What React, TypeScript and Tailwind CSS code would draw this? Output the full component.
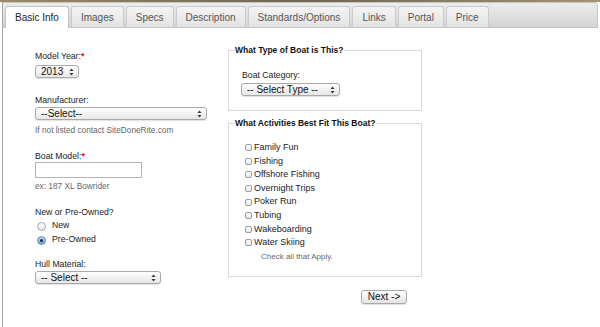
import React from 'react';

const tabs = ['Basic Info', 'Images', 'Specs', 'Description', 'Standards/Options', 'Links', 'Portal', 'Price'];

const activities = [
  'Family Fun',
  'Fishing',
  'Offshore Fishing',
  'Overnight Trips',
  'Poker Run',
  'Tubing',
  'Wakeboarding',
  'Water Skiing',
];

const Arrows: React.FC = () => (
  <svg width="5" height="8" viewBox="0 0 5 8" className="shrink-0">
    <path d="M2.5 0.5L4.5 3H0.5Z" fill="#333" />
    <path d="M2.5 7.5L4.5 5H0.5Z" fill="#333" />
  </svg>
);

const FakeSelect: React.FC<{ label: string; width: string }> = ({ label, width }) => (
  <div
    className={`${width} h-[13px] flex items-center justify-between pl-[5px] pr-[4px] rounded-[3px] border border-[#a9a9a9] bg-gradient-to-b from-white to-[#e6e6e6] shadow-[0_1px_1px_rgba(0,0,0,0.12)] text-[10px] leading-none text-[#111]`}
  >
    <span>{label}</span>
    <Arrows />
  </div>
);

const Label: React.FC<{ text: string; required?: boolean }> = ({ text, required }) => (
  <div className="text-[8.7px] leading-[11px] text-[#222]">
    {text}
    {required && <span className="text-[#e00] font-bold">*</span>}
  </div>
);

const App: React.FC = () => {
  return (
    <div className="w-[600px] h-[327px] overflow-hidden bg-white flex flex-col font-['Liberation_Sans',Arial,sans-serif]">
      {/* top photo strip */}
      <div className="h-[2px] shrink-0 bg-gradient-to-r from-[#9a8a66] via-[#6f6550] to-[#a39472]" />

      <div className="flex-1 flex flex-col ml-[2px] mr-[2px] border-l border-[#a8a8a8]">
        {/* tab bar */}
        <div className="h-[26px] shrink-0 flex items-end gap-[2px] pl-[2px] rounded-tr-[4px] border-t border-r border-b border-[#c6c6c6] bg-gradient-to-b from-[#ededed] to-[#d3d3d3]">
          {tabs.map((t, i) => (
            <div
              key={t}
              className={
                i === 0
                  ? 'h-[22px] -mb-[1px] px-[9px] flex items-center rounded-t-[3px] border border-b-0 border-[#c2c2c2] bg-white text-[10px] text-[#222]'
                  : 'h-[21px] px-[9px] flex items-center rounded-t-[3px] border border-b-0 border-[#cacaca] bg-gradient-to-b from-[#f4f4f4] to-[#e3e3e3] text-[10px] text-[#555]'
              }
            >
              {t}
            </div>
          ))}
        </div>

        {/* form body */}
        <div className="flex flex-1">
          {/* left column */}
          <div className="w-[192px] ml-[32px] pt-[23px] flex flex-col items-start">
            <Label text="Model Year:" required />
            <div className="mt-[3px]">
              <FakeSelect label="2013" width="w-[44px]" />
            </div>

            <div className="mt-[17px]">
              <Label text="Manufacturer:" />
            </div>
            <div className="mt-[1px]">
              <FakeSelect label="--Select--" width="w-[172px]" />
            </div>
            <div className="mt-[5px] text-[8.3px] leading-[10px] text-[#666]">If not listed contact SiteDoneRite.com</div>

            <div className="mt-[16px]">
              <Label text="Boat Model:" required />
            </div>
            <input
              type="text"
              className="w-[107px] h-[16px] border border-[#b5b5b5] bg-white outline-none"
              readOnly
            />
            <div className="mt-[3px] text-[8.3px] leading-[10px] text-[#666]">ex: 187 XL Bowrider</div>

            <div className="mt-[16px]">
              <Label text="New or Pre-Owned?" />
            </div>
            <div className="mt-[1px] flex flex-col">
              <div className="h-[14px] flex items-center pl-[2px] gap-[6px] text-[8.7px] text-[#222]">
                <span className="w-[9px] h-[9px] rounded-full border border-[#a5a5a5] bg-gradient-to-b from-white to-[#e4e4e4]" />
                New
              </div>
              <div className="h-[14px] flex items-center pl-[2px] gap-[6px] text-[8.7px] text-[#222]">
                <span className="w-[9px] h-[9px] rounded-full border border-[#5a87c0] bg-gradient-to-b from-[#bcd6f4] to-[#6fa1dc] flex items-center justify-center">
                  <span className="w-[3px] h-[3px] rounded-full bg-[#1b2a3a]" />
                </span>
                Pre-Owned
              </div>
            </div>

            <div className="mt-[12px]">
              <Label text="Hull Material:" />
            </div>
            <div className="mt-[1px]">
              <FakeSelect label="-- Select --" width="w-[126px]" />
            </div>
          </div>

          {/* right column */}
          <div className="w-[194px] ml-[1px] flex flex-col">
            <fieldset className="mt-[17px] border border-[#d9d9d9] pl-[12px] pb-[14px]">
              <legend className="ml-[-7px] px-[1px] text-[8.5px] leading-[10px] font-bold text-[#111]">
                What Type of Boat is This?
              </legend>
              <div className="mt-[15px] pl-[1px]">
                <Label text="Boat Category:" />
              </div>
              <div className="mt-[2px]">
                <FakeSelect label="-- Select Type --" width="w-[99px]" />
              </div>
            </fieldset>

            <fieldset className="mt-[7px] border border-[#d9d9d9] pl-[16px] pb-[13px]">
              <legend className="ml-[-11px] px-[1px] text-[8.5px] leading-[10px] font-bold text-[#111]">
                What Activities Best Fit This Boat?
              </legend>
              <div className="mt-[13px] flex flex-col">
                {activities.map((a) => (
                  <div key={a} className="h-[13.6px] flex items-center gap-[2px] text-[9px] text-[#222]">
                    <span className="w-[7px] h-[7px] rounded-[2px] border border-[#9c9c9c] bg-gradient-to-b from-white to-[#e8e8e8]" />
                    {a}
                  </div>
                ))}
                <div className="h-[12px] mt-[1px] pl-[16px] flex items-center text-[8px] text-[#666]">
                  Check all that Apply.
                </div>
              </div>
            </fieldset>

            <div className="mt-[6px] ml-[133px]">
              <button className="w-[46px] h-[14px] rounded-[3px] border border-[#a9a9a9] bg-gradient-to-b from-white to-[#e4e4e4] shadow-[0_1px_1px_rgba(0,0,0,0.12)] text-[10px] leading-none text-[#111]">
                Next -&gt;
              </button>
            </div>
          </div>
        </div>
      </div>
    </div>
  );
};

export default App;
